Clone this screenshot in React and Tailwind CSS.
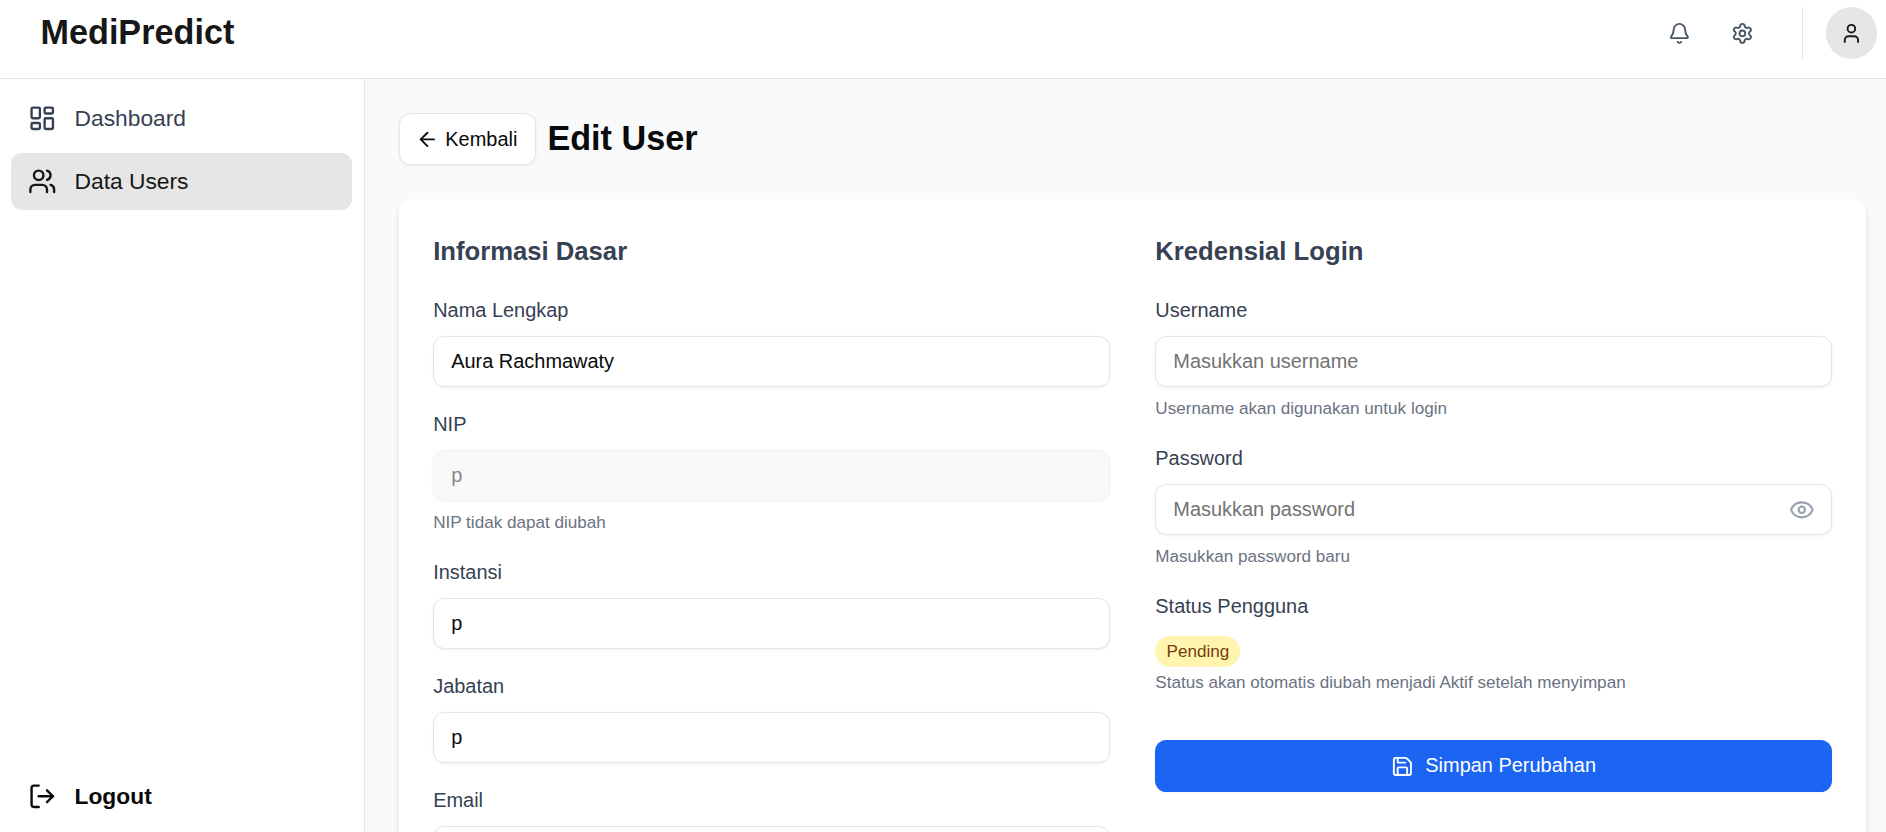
import { useState } from "react";
import {
  ArrowLeft,
  Bell,
  Eye,
  LayoutDashboard,
  LogOut,
  Save,
  Settings,
  User,
  Users,
} from "lucide-react";

function Header() {
  return (
    <header className="flex h-[79px] shrink-0 items-start justify-between border-b border-[#e5e5e5] bg-white pt-[7px] pr-[9px] pl-[40.5px]">
      <h1 className="mt-[5px] text-[34.2px] leading-[40px] font-bold text-neutral-900">
        MediPredict
      </h1>
      <div className="flex items-center text-gray-600">
        <button className="flex size-[51px] items-center justify-center" aria-label="Notifikasi">
          <Bell size={22.8} />
        </button>
        <button className="ml-[12px] flex size-[51px] items-center justify-center" aria-label="Pengaturan">
          <Settings size={22.8} />
        </button>
        <div className="mr-[23px] ml-[34px] h-[52px] w-px bg-[#e5e5e5]" />
        <button
          className="flex h-[52px] w-[51px] items-center justify-center rounded-full bg-[#e6e6e6] text-neutral-900"
          aria-label="Profil"
        >
          <User size={22.8} />
        </button>
      </div>
    </header>
  );
}

function Sidebar() {
  return (
    <aside className="flex w-[365px] shrink-0 flex-col justify-between border-r border-[#e5e5e5] bg-white pt-[11px] pr-[12px] pb-[7px] pl-[11px]">
      <nav className="flex flex-col gap-[6px] text-[22.8px] leading-[34px]">
        <a className="flex h-[57px] items-center gap-[18px] rounded-[11px] px-[17px] text-gray-700">
          <LayoutDashboard size={28.5} />
          <span className="-mt-[2px]">Dashboard</span>
        </a>
        <a className="flex h-[57px] items-center gap-[18px] rounded-[11px] bg-[#e6e6e6] px-[17px] text-neutral-900">
          <Users size={28.5} />
          <span className="-mt-[2px]">Data Users</span>
        </a>
      </nav>
      <button className="flex h-[57px] items-center gap-[18px] px-[17px] text-[22.8px] font-bold text-neutral-950">
        <LogOut size={28.5} />
        <span>Logout</span>
      </button>
    </aside>
  );
}

function Field({ label, helper, trailing, ...inputProps }) {
  return (
    <div className="flex flex-col">
      <label className="text-[19.95px] leading-[28.5px] text-gray-700">{label}</label>
      <div className="relative mt-[11.4px]">
        <input
          {...inputProps}
          className="block h-[51.3px] w-full rounded-[11.4px] border border-[#e5e5e5] bg-white px-[17px] text-[19.95px] text-neutral-950 shadow-[0_1px_3px_0_rgb(0_0_0/0.06)] outline-none placeholder:text-[#737373] disabled:bg-neutral-100 disabled:opacity-50"
        />
        {trailing}
      </div>
      {helper && (
        <p className="mt-[11px] mb-[0.4px] text-[17.1px] leading-[22.8px] text-gray-500">{helper}</p>
      )}
    </div>
  );
}

function SectionTitle({ children }) {
  return (
    <h3 className="-mt-px mb-px text-[25.66px] leading-[39.9px] font-bold text-gray-700">
      {children}
    </h3>
  );
}

export default function App() {
  const [visible, setVisible] = useState(false);

  return (
    <div className="flex h-screen flex-col overflow-hidden font-['Liberation_Sans',Arial,sans-serif] text-neutral-950">
      <Header />
      <div className="flex min-h-0 flex-1">
        <Sidebar />
        <main className="min-w-0 flex-1 overflow-hidden bg-gray-50 pt-[34px] pr-[20px] pl-[34px]">
          <div className="flex items-center gap-[11.4px]">
            <button className="flex h-[52px] w-[137px] items-center gap-[6.5px] rounded-[11.4px] border border-[#e5e5e5] bg-white pl-[16px] text-[19.95px] shadow-[0_1px_3px_0_rgb(0_0_0/0.06)]">
              <ArrowLeft size={22.8} />
              <span className="mt-px">Kembali</span>
            </button>
            <h2 className="-mt-[3px] text-[34.2px] leading-[40px] font-bold">Edit User</h2>
          </div>

          <form
            className="mt-[34px] grid grid-cols-2 gap-[45.6px] rounded-[14px] bg-white p-[34.2px] shadow-[0_6px_9px_-1px_rgb(0_0_0/0.1),0_3px_6px_-2px_rgb(0_0_0/0.1)]"
            onSubmit={(event) => event.preventDefault()}
          >
            <section className="flex flex-col gap-[22.8px]">
              <SectionTitle>Informasi Dasar</SectionTitle>
              <Field label="Nama Lengkap" defaultValue="Aura Rachmawaty" />
              <Field label="NIP" defaultValue="p" disabled helper="NIP tidak dapat diubah" />
              <Field label="Instansi" defaultValue="p" />
              <Field label="Jabatan" defaultValue="p" />
              <Field label="Email" type="email" />
            </section>

            <section className="flex flex-col gap-[22.8px]">
              <SectionTitle>Kredensial Login</SectionTitle>
              <Field
                label="Username"
                placeholder="Masukkan username"
                helper="Username akan digunakan untuk login"
              />
              <Field
                label="Password"
                type={visible ? "text" : "password"}
                placeholder="Masukkan password"
                helper="Masukkan password baru"
                trailing={
                  <button
                    type="button"
                    aria-label="Tampilkan password"
                    className="absolute inset-y-0 right-[17px] flex items-center text-gray-400"
                    onClick={() => setVisible(!visible)}
                  >
                    <Eye size={25.66} />
                  </button>
                }
              />
              <div className="flex flex-col items-start">
                <span className="text-[19.95px] leading-[28.5px] text-gray-700">
                  Status Pengguna
                </span>
                <span className="mt-[15.4px] flex h-[31px] items-center rounded-full bg-[#fff4b0] px-[11.2px] text-[17.1px] text-yellow-900">
                  Pending
                </span>
                <p className="mt-[5px] text-[17.1px] leading-[22.8px] text-gray-500">
                  Status akan otomatis diubah menjadi Aktif setelah menyimpan
                </p>
                <button className="mt-[45px] flex h-[52px] w-full items-center justify-center gap-[11.4px] rounded-[11.4px] bg-[#1c64f2] text-[19.95px] text-white shadow-[0_1px_3px_0_rgb(0_0_0/0.06)]">
                  <Save size={22.8} />
                  Simpan Perubahan
                </button>
              </div>
            </section>
          </form>
        </main>
      </div>
    </div>
  );
}
